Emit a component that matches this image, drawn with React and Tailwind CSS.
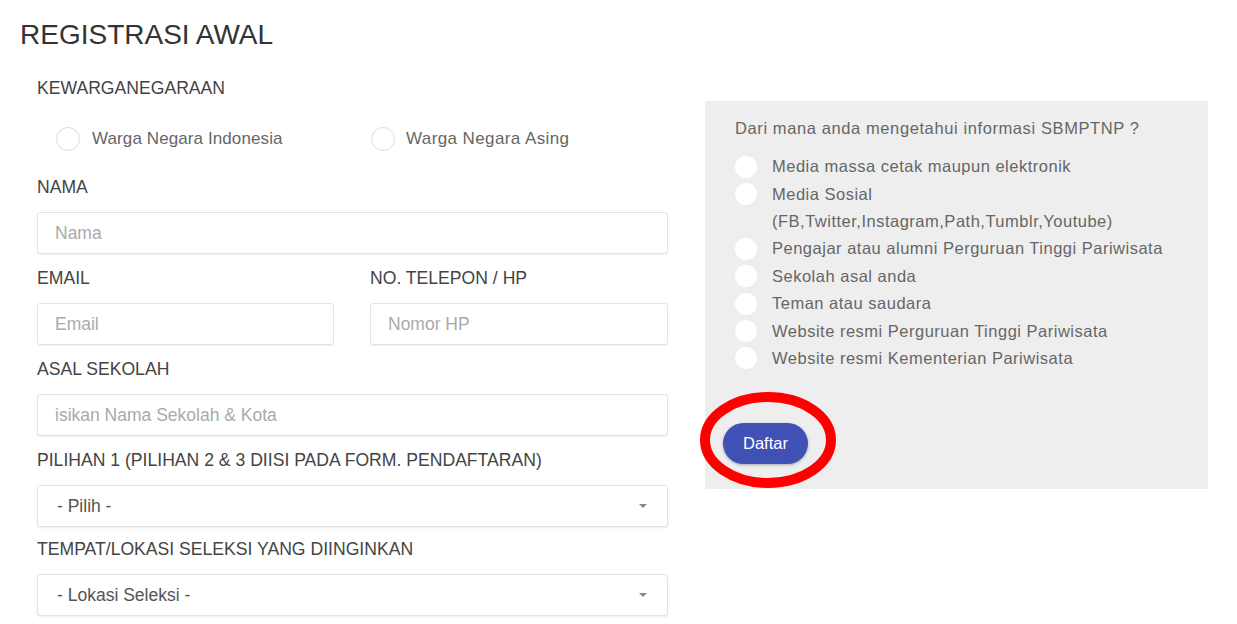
import React from "react";

const font = { fontFamily: '"Liberation Sans", Arial, sans-serif' };

const Label = ({ children }) => (
    <div className="h-[24px] leading-[24px] text-[17.6px] text-[#444] uppercase">{children}</div>
);

const Field = ({ placeholder }) => (
    <div className="mt-[13px] h-[42px] border border-[#e3e3e3] rounded-[3px] bg-white shadow-[0_1px_1px_rgba(0,0,0,0.06)] flex items-center px-[17px] text-[17.5px] text-[#aaaaaa]">
        {placeholder}
    </div>
);

const Select = ({ value }) => (
    <div className="mt-[13px] h-[42px] border border-[#e3e3e3] rounded-[3px] bg-white shadow-[0_1px_2px_rgba(0,0,0,0.08)] flex items-center justify-between pl-[19px] pr-[20px] text-[17.5px] text-[#555]">
        <span>{value}</span>
        <span className="w-0 h-0 border-l-[4px] border-r-[4px] border-t-[4px] border-l-transparent border-r-transparent border-t-[#8a8a8a]" />
    </div>
);

const sources = [
    "Media massa cetak maupun elektronik",
    "Media Sosial",
    null,
    "Pengajar atau alumni Perguruan Tinggi Pariwisata",
    "Sekolah asal anda",
    "Teman atau saudara",
    "Website resmi Perguruan Tinggi Pariwisata",
    "Website resmi Kementerian Pariwisata",
];

export default function App() {
    return (
        <div className="w-[1237px] h-[624px] bg-white overflow-hidden relative" style={font}>
            <h1 className="pl-[20px] pt-[19px] h-[56px] text-[28px] leading-[32px] text-[#333] tracking-[0px]">
                REGISTRASI AWAL
            </h1>
            <div className="flex pl-[37px]">
                {/* form */}
                <div className="w-[631px]">
                    <div className="pt-[20px]">
                        <Label>Kewarganegaraan</Label>
                    </div>
                    <div className="h-[50px] mt-[14px] flex items-center">
                        <div className="w-[334px] flex items-center pl-[19px]">
                            <span className="w-[24px] h-[24px] rounded-full border border-[#dcdcdc] bg-white" />
                            <span className="ml-[12px] text-[17px] text-[#666] tracking-[0.1px]">Warga Negara Indonesia</span>
                        </div>
                        <div className="flex items-center">
                            <span className="w-[24px] h-[24px] rounded-full border border-[#dcdcdc] bg-white" />
                            <span className="ml-[11px] text-[17px] text-[#666] tracking-[0.4px]">Warga Negara Asing</span>
                        </div>
                    </div>
                    <div className="mt-[11px]">
                        <Label>Nama</Label>
                        <Field placeholder="Nama" />
                    </div>
                    <div className="mt-[12px] flex gap-[36px]">
                        <div className="w-[297px]">
                            <Label>Email</Label>
                            <Field placeholder="Email" />
                        </div>
                        <div className="w-[298px]">
                            <Label>No. Telepon / HP</Label>
                            <Field placeholder="Nomor HP" />
                        </div>
                    </div>
                    <div className="mt-[12px]">
                        <Label>Asal Sekolah</Label>
                        <Field placeholder="isikan Nama Sekolah & Kota" />
                    </div>
                    <div className="mt-[12px]">
                        <Label>Pilihan 1 (Pilihan 2 &amp; 3 diisi pada form. pendaftaran)</Label>
                        <Select value="- Pilih -" />
                    </div>
                    <div className="mt-[10px]">
                        <Label>Tempat/Lokasi Seleksi yang diinginkan</Label>
                        <Select value="- Lokasi Seleksi -" />
                    </div>
                </div>

                {/* survey panel */}
                <div className="ml-[37px] mt-[45px] w-[503px] h-[388px] bg-[#eeeeee] pl-[30px] pt-[16px] relative">
                    <p className="h-[22px] leading-[22px] text-[16.5px] text-[#666] tracking-[0.6px]">
                        Dari mana anda mengetahui informasi SBMPTNP ?
                    </p>
                    <div className="mt-[14px] flex flex-col">
                        {sources.map((s, i) => (
                            <div key={i} className="h-[27.4px] flex items-center">
                                {s ? (
                                    <span className="w-[22px] h-[22px] rounded-full bg-white shrink-0" />
                                ) : (
                                    <span className="w-[22px] shrink-0" />
                                )}
                                <span className="ml-[15px] text-[16.5px] text-[#666] tracking-[0.5px]">
                                    {s || "(FB,Twitter,Instagram,Path,Tumblr,Youtube)"}
                                </span>
                            </div>
                        ))}
                    </div>
                    <button className="mt-[51px] -ml-[12px] w-[85px] h-[41px] rounded-full bg-[#3f51b5] text-white text-[16.5px] shadow-[0_1px_3px_rgba(0,0,0,0.3)]">
                        Daftar
                    </button>
                </div>
            </div>

            {/* red annotation ellipse */}
            <svg className="absolute left-[698px] top-[388px]" width="144" height="104" viewBox="0 0 144 104">
                <ellipse cx="70" cy="52" rx="63" ry="43" fill="none" stroke="#ff0000" strokeWidth="10" />
            </svg>
        </div>
    );
}
